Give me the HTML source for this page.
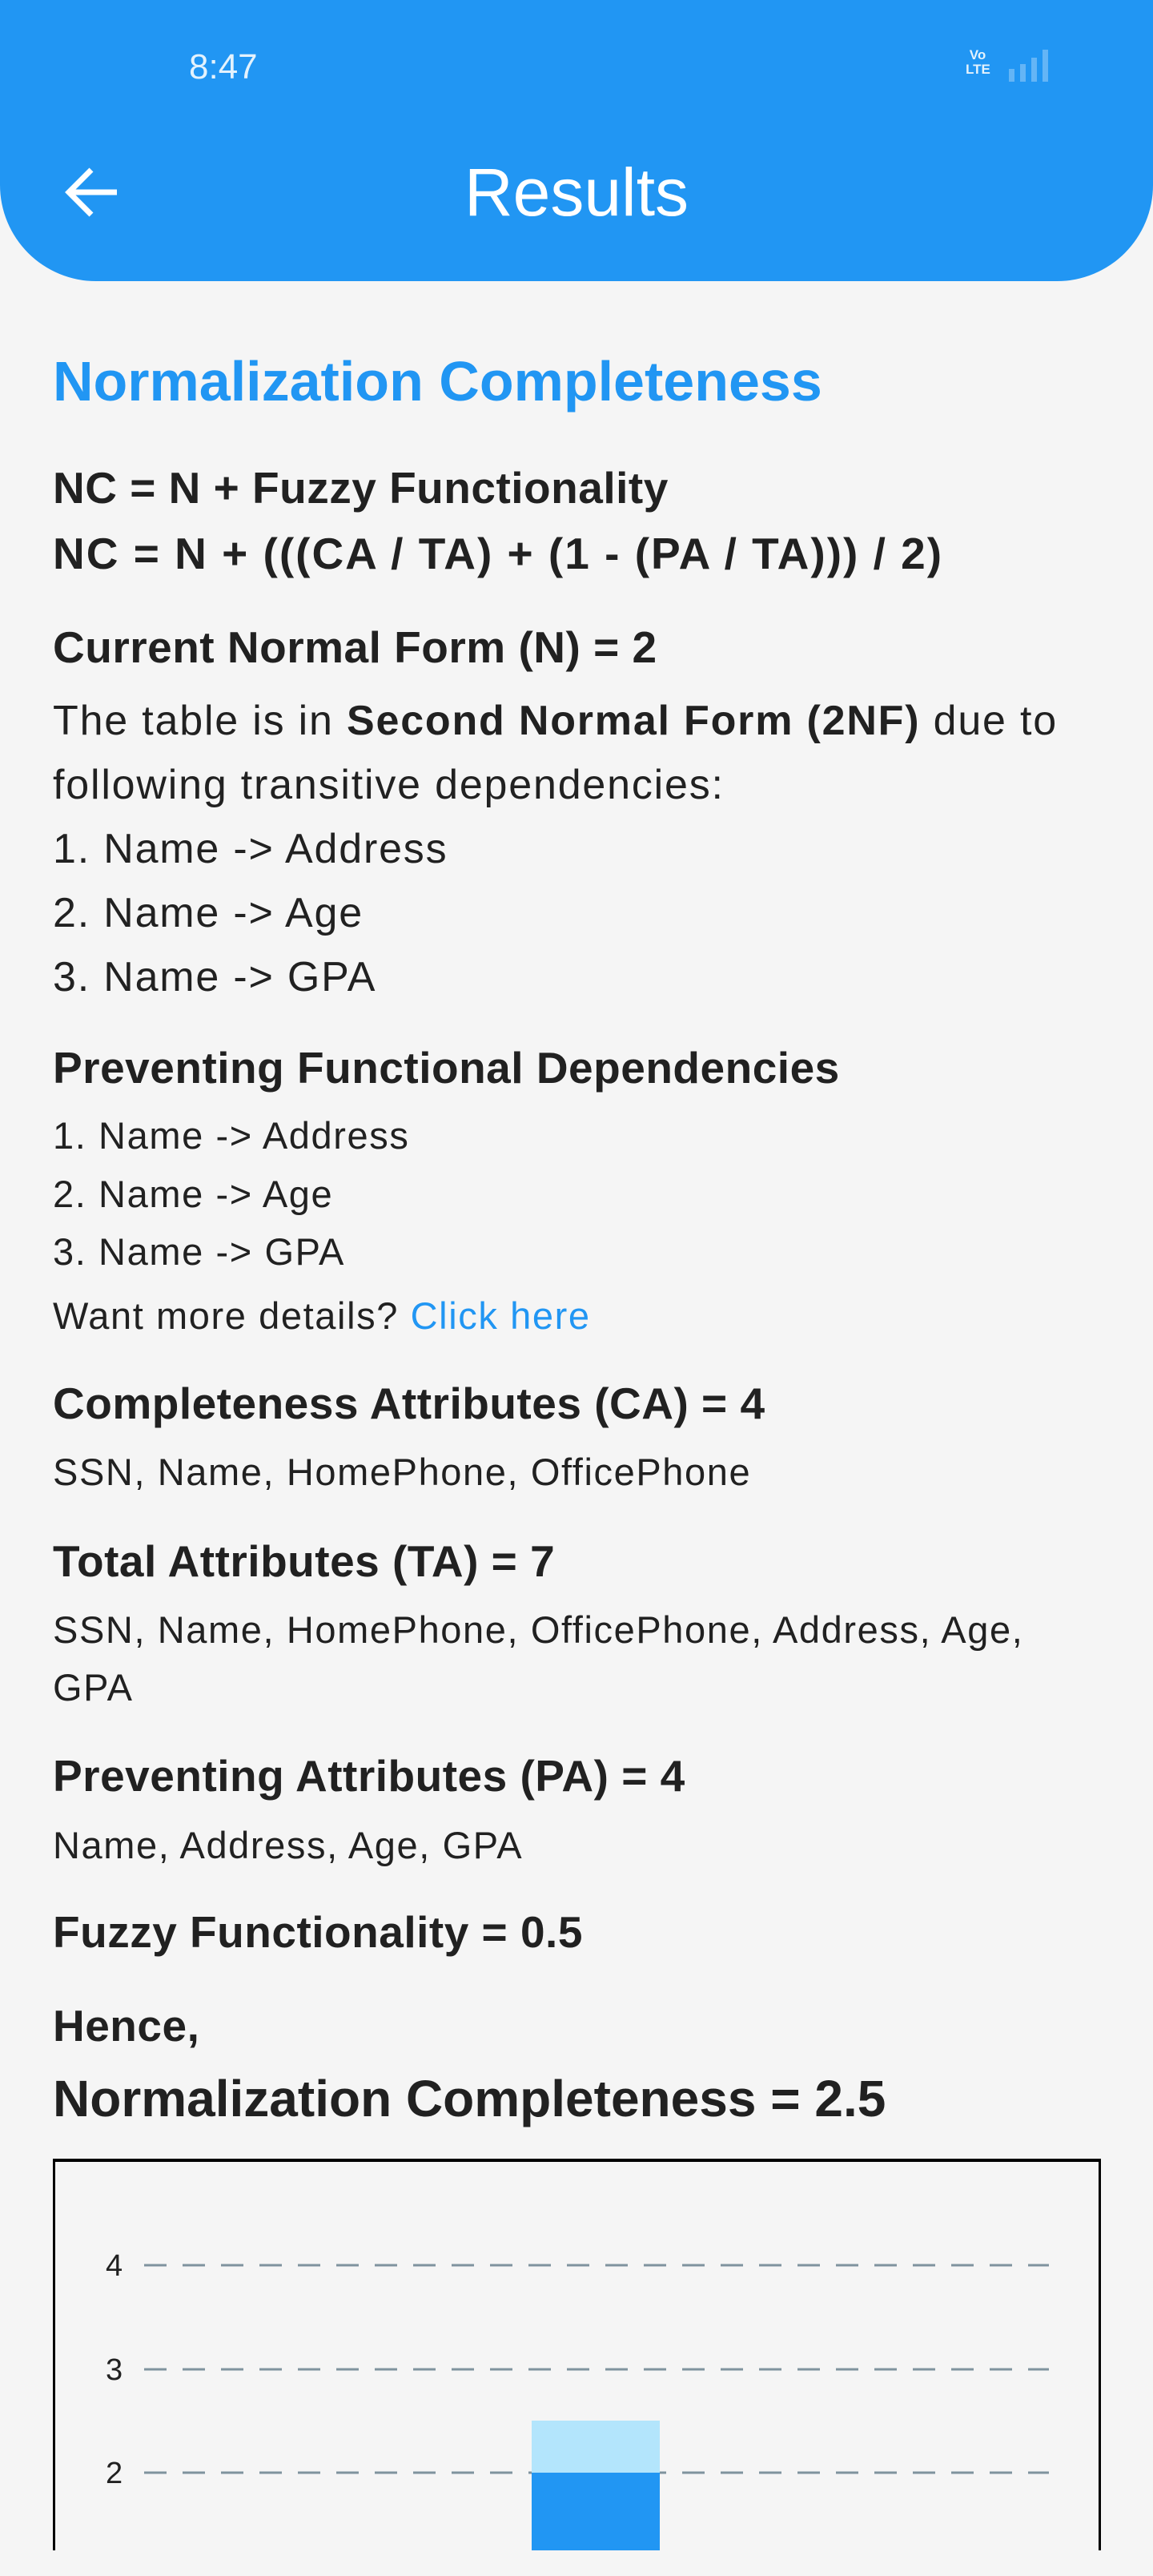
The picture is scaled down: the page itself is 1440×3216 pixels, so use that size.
<!DOCTYPE html>
<html><head><meta charset="utf-8"><style>
*{margin:0;padding:0;box-sizing:border-box}
html,body{width:1440px;height:3216px;background:#f5f5f5;overflow:hidden;font-family:"Liberation Sans",Arial,sans-serif;color:#212121}
.hdr{position:absolute;left:0;top:0;width:1440px;height:351px;background:#2196f3;border-radius:0 0 120px 120px}
.t{position:absolute;left:66px;white-space:nowrap;height:80px;line-height:80px}
.h{font-weight:700;font-size:55px;letter-spacing:0.5px}
.b{font-size:52px;letter-spacing:1.8px}
.s{font-size:47px;letter-spacing:1.6px}
.blue{color:#2196f3}
</style></head><body>
<div class="hdr"></div>
<div style="position:absolute;left:236px;top:56px;font-size:44px;color:#e3f2fd;line-height:56px">8:47</div>
<div style="position:absolute;left:1206px;top:60px;color:#e3f2fd;font-size:17px;font-weight:700;line-height:18px;text-align:center;width:30px">Vo<br>LTE</div>
<svg style="position:absolute;left:1258px;top:60px" width="60" height="44"><rect x="2" y="26" width="7" height="16" fill="#64b5f6"/><rect x="16" y="20" width="7" height="22" fill="#64b5f6"/><rect x="30" y="12" width="7" height="30" fill="#64b5f6"/><rect x="44" y="2" width="7" height="40" fill="#64b5f6"/></svg>
<svg style="position:absolute;left:76px;top:205px" width="76" height="70" viewBox="0 0 76 70"><path d="M70 35H10M38 7L10 35L38 63" stroke="#fff" stroke-width="7" fill="none"/></svg>
<div style="position:absolute;left:0;width:1440px;text-align:center;top:190px;line-height:100px;font-size:84px;color:#fff">Results</div>

<div class="t blue" style="top:436px;font-size:70px;font-weight:700">Normalization Completeness</div>
<div class="t h" style="top:569px">NC = N + Fuzzy Functionality</div>
<div class="t h" style="top:651px;letter-spacing:2px">NC = N + (((CA / TA) + (1 - (PA / TA))) / 2)</div>
<div class="t h" style="top:768px">Current Normal Form (N) = 2</div>
<div class="t b" style="top:860px">The table is in <b>Second Normal Form (2NF)</b> due to</div>
<div class="t b" style="top:940px">following transitive dependencies:</div>
<div class="t b" style="top:1020px">1. Name -&gt; Address</div>
<div class="t b" style="top:1100px">2. Name -&gt; Age</div>
<div class="t b" style="top:1180px">3. Name -&gt; GPA</div>
<div class="t h" style="top:1293px">Preventing Functional Dependencies</div>
<div class="t s" style="top:1378px">1. Name -&gt; Address</div>
<div class="t s" style="top:1451px">2. Name -&gt; Age</div>
<div class="t s" style="top:1523px">3. Name -&gt; GPA</div>
<div class="t s" style="top:1603px">Want more details? <span class="blue">Click here</span></div>
<div class="t h" style="top:1712px">Completeness Attributes (CA) = 4</div>
<div class="t s" style="top:1798px">SSN, Name, HomePhone, OfficePhone</div>
<div class="t h" style="top:1909px">Total Attributes (TA) = 7</div>
<div class="t s" style="top:1995px">SSN, Name, HomePhone, OfficePhone, Address, Age,</div>
<div class="t s" style="top:2067px">GPA</div>
<div class="t h" style="top:2177px">Preventing Attributes (PA) = 4</div>
<div class="t s" style="top:2264px">Name, Address, Age, GPA</div>
<div class="t h" style="top:2372px">Fuzzy Functionality = 0.5</div>
<div class="t h" style="top:2489px">Hence,</div>
<div class="t" style="top:2580px;font-size:64px;font-weight:700">Normalization Completeness = 2.5</div>

<div style="position:absolute;left:66px;top:2695px;width:1309px;height:489px;border:3px solid #000;border-top-width:4px;border-bottom:none"></div>
<svg style="position:absolute;left:0;top:2780px" width="1440" height="404">
<g stroke="#7f939e" stroke-width="3" stroke-dasharray="28 20">
<line x1="180" y1="48" x2="1310" y2="48"/><line x1="180" y1="178" x2="1310" y2="178"/><line x1="180" y1="307" x2="1310" y2="307"/></g>
<rect x="664" y="242" width="160" height="65" fill="#b3e5fc"/>
<rect x="664" y="307" width="160" height="97" fill="#2196f3"/>
<g font-family="Liberation Sans,sans-serif" font-size="38" fill="#212121"><text x="132" y="61">4</text><text x="132" y="191">3</text><text x="132" y="320">2</text></g>
</svg>
</body></html>
